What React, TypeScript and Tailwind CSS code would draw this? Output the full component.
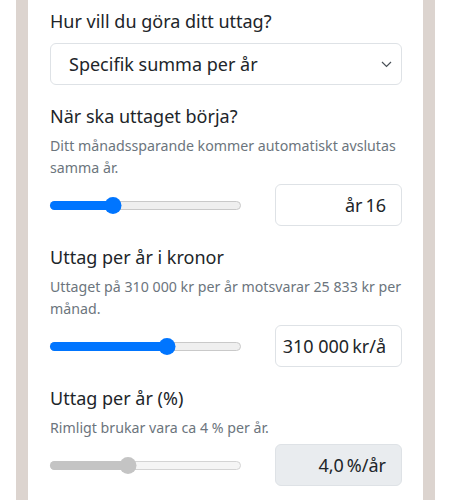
import React from "react";

type RangeProps = { pct: number; disabled?: boolean };

function Range({ pct, disabled }: RangeProps) {
  const fill = disabled ? "bg-[#c4c4c4]" : "bg-[#0075ff]";
  return (
    <div className="relative flex-1 h-[17px] flex items-center">
      <div
        className={`relative w-full h-[9px] rounded-full border ${
          disabled ? "border-[#d4d4d4] bg-[#f5f5f5]" : "border-[#c9c9c9] bg-[#efefef]"
        }`}
      >
        <div className={`absolute left-[-1px] top-[-1px] h-[9px] rounded-full ${fill}`} style={{ width: `${pct}%` }} />
      </div>
      <div
        className={`absolute w-[17px] h-[17px] rounded-full -translate-x-1/2 ${fill}`}
        style={{ left: `${pct}%` }}
      />
    </div>
  );
}

function Field({ title, desc, pct, value, disabled }: { title: string; desc: string; pct: number; value: string; disabled?: boolean }) {
  return (
    <div className="mt-[18px]">
      <h3 className="text-[18px] leading-[27px] text-[#212529]">{title}</h3>
      <p className="mt-[5px] text-[14.2px] leading-[22px] text-[#6c757d]">{desc}</p>
      <div className="mt-[5px] flex items-center">
        <div className="w-[191px] flex">
          <Range pct={pct} disabled={disabled} />
        </div>
        <div
          className={`ml-auto w-[127px] h-[42px] rounded-[6px] border border-[#dee2e6] flex items-center justify-end pr-[15px] text-[18px] text-[#212529] ${
            disabled ? "bg-[#e9ecef]" : "bg-white"
          }`}
        >
          {value}
        </div>
      </div>
    </div>
  );
}

export default function App() {
  return (
    <div className="w-[452px] h-[500px] bg-white overflow-hidden" style={{ fontFamily: '"Noto Sans", "Open Sans", sans-serif' }}>
      <div className="ml-4 w-[419px] h-full bg-[#dcd4cf] px-3">
        <div className="h-full bg-white pl-[22px] pr-[21px] pt-[8px]">
          <h3 className="text-[18px] leading-[27px] text-[#212529]">Hur vill du göra ditt uttag?</h3>
          <div className="mt-[8px] h-[42px] rounded-[6px] border border-[#dee2e6] flex items-center pl-[18px] pr-[9px] text-[18px] text-[#212529]">
            <span className="flex-1">Specifik summa per år</span>
            <svg width="11" height="7" viewBox="0 0 11 7" fill="none">
              <path d="M1 1l4.5 4.5L10 1" stroke="#495057" strokeWidth="1.2" />
            </svg>
          </div>

          <Field
            title="När ska uttaget börja?"
            desc="Ditt månadssparande kommer automatiskt avslutas samma år."
            pct={33}
            value={"år\u202F16"}
          />
          <Field
            title="Uttag per år i kronor"
            desc="Uttaget på 310 000 kr per år motsvarar 25 833 kr per månad."
            pct={61}
            value={"310\u00A0000\u202Fkr/å"}
          />
          <Field
            title="Uttag per år (%)"
            desc="Rimligt brukar vara ca 4 % per år."
            pct={41}
            value={"4,0\u202F%/år"}
            disabled
          />
        </div>
      </div>
    </div>
  );
}
